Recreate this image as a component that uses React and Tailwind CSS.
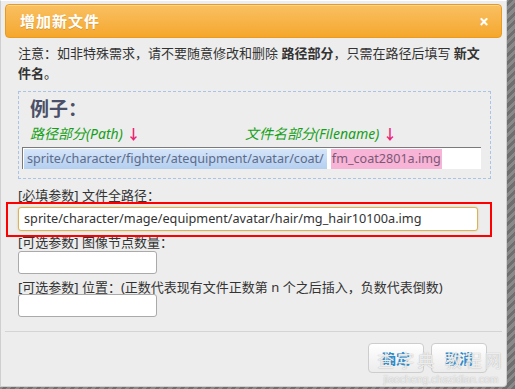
import React from "react";

const cjk = "font-['Noto_Sans','Noto_Sans_CJK_SC',sans-serif]";

export default function App() {
  return (
    <div className="w-[515px] h-[389px] flex bg-[repeating-linear-gradient(135deg,#6f6f6f_0px,#6f6f6f_3px,#8a8a8a_3px,#8a8a8a_6px)] overflow-hidden">
      <div className={`relative w-[507px] h-[387px] bg-[#ededed] border border-[#cfcfcf] border-t-white rounded-br-[4px] flex flex-col ${cjk} text-[#333]`}>
        <div className="mx-[4px] mt-[3px] h-[34px] rounded-[4px] border border-[#ea9b1f] bg-gradient-to-b from-[#f9c061] to-[#f5a729] flex items-center justify-between px-[14px] shadow-[inset_0_1px_0_rgba(255,255,255,0.35)]">
          <span className="text-white font-bold text-[15px] tracking-[1px] [text-shadow:0_1px_0_rgba(0,0,0,0.15)]">增加新文件</span>
          <span className="text-white font-bold text-[17px] leading-none mr-[-2px]">×</span>
        </div>
        <div className="px-[17px]">
          <p className="mt-[5px] text-[13px] leading-[20px]">
            注意：如非特殊需求，请不要随意修改和删除 <b>路径部分</b>，只需在路径后填写 <b>新文件名</b>。
          </p>
          <div className="mt-[8px] w-[473px] h-[88px] border border-dashed border-[#a9c4e4] flex flex-col px-[3px]">
            <div className="ml-[8px] mt-[5px] text-[19px] leading-[24px] font-bold text-[#4b5068]">例子：</div>
            <div className="ml-[8px] mt-[2px] h-[20px] flex items-center text-[14px] italic text-[#15a018]">
              <span className="w-[215px]">路径部分(Path) <span className="not-italic text-[#ee1c76] font-bold">↓</span></span>
              <span>文件名部分(Filename) <span className="not-italic text-[#ee1c76] font-bold">↓</span></span>
            </div>
            <div className="mt-[4px] w-[459px] h-[22px] bg-white border-t border-l border-[#7a7a7a] flex items-center pl-[1px] text-[12.6px] whitespace-nowrap">
              <span className="bg-gradient-to-b from-[#d5e5f9] to-[#b4cff0] text-[#5d6b8a] px-[3px] leading-[20px]">sprite/character/fighter/atequipment/avatar/coat/</span>
              <span className="ml-[4px] bg-[#f7b4d6] text-[#7d5876] px-[1px] leading-[20px]">fm_coat2801a.img</span>
            </div>
          </div>
          <div className="mt-[7px] text-[13px] leading-[18px]">[必填参数] 文件全路径：</div>
          <div className="mt-[3px] w-[460px] h-[24px] bg-white border border-[#d8b25e] rounded-[3px] flex items-center pl-[5px] text-[12.7px] text-[#333] whitespace-nowrap shadow-[0_0_2px_#e8c77a]">
            sprite/character/mage/equipment/avatar/hair/mg_hair10100a.img
          </div>
          <div className="mt-[2px] text-[13px] leading-[18px]">[可选参数] 图像节点数量：</div>
          <div className="w-[139px] h-[23px] bg-white border border-[#aaa] rounded-[3px]"></div>
          <div className="mt-[7px] text-[13px] leading-[13px]">[可选参数] 位置：(正数代表现有文件正数第 n 个之后插入，负数代表倒数)</div>
          <div className="w-[139px] h-[23px] bg-white border border-[#aaa] rounded-[3px]"></div>
        </div>
        <div className="mt-[14px] mx-[4px] border-t border-[#d4d4d4]"></div>
        <div className="mt-[11px] flex justify-end gap-[7px] pr-[19px]">
          <button className="w-[56px] h-[30px] rounded-[4px] border border-[#cdcdcd] bg-gradient-to-b from-white to-[#ececec] text-[#2a8ccd] font-bold text-[14px]">确定</button>
          <button className="w-[56px] h-[30px] rounded-[4px] border border-[#cdcdcd] bg-gradient-to-b from-white to-[#ececec] text-[#2a8ccd] font-bold text-[14px]">取消</button>
        </div>
        <div className="absolute left-[5px] top-[201px] w-[486px] h-[35px] border-2 border-[#ff0000] pointer-events-none"></div>
        <div className="absolute left-[382px] top-[350px] w-[116px] flex flex-col items-center text-white/80 pointer-events-none font-['Liberation_Sans','Noto_Sans_CJK_SC',sans-serif]">
          <span className="text-[17px] leading-[21px] tracking-[3px] [text-shadow:0_0_1px_#999] whitespace-nowrap">查字典 教程网</span>
          <span className="text-[10.5px] leading-[14px] [text-shadow:0_0_1px_#999] whitespace-nowrap">jiaocheng.chazidian.com</span>
        </div>
      </div>
    </div>
  );
}
